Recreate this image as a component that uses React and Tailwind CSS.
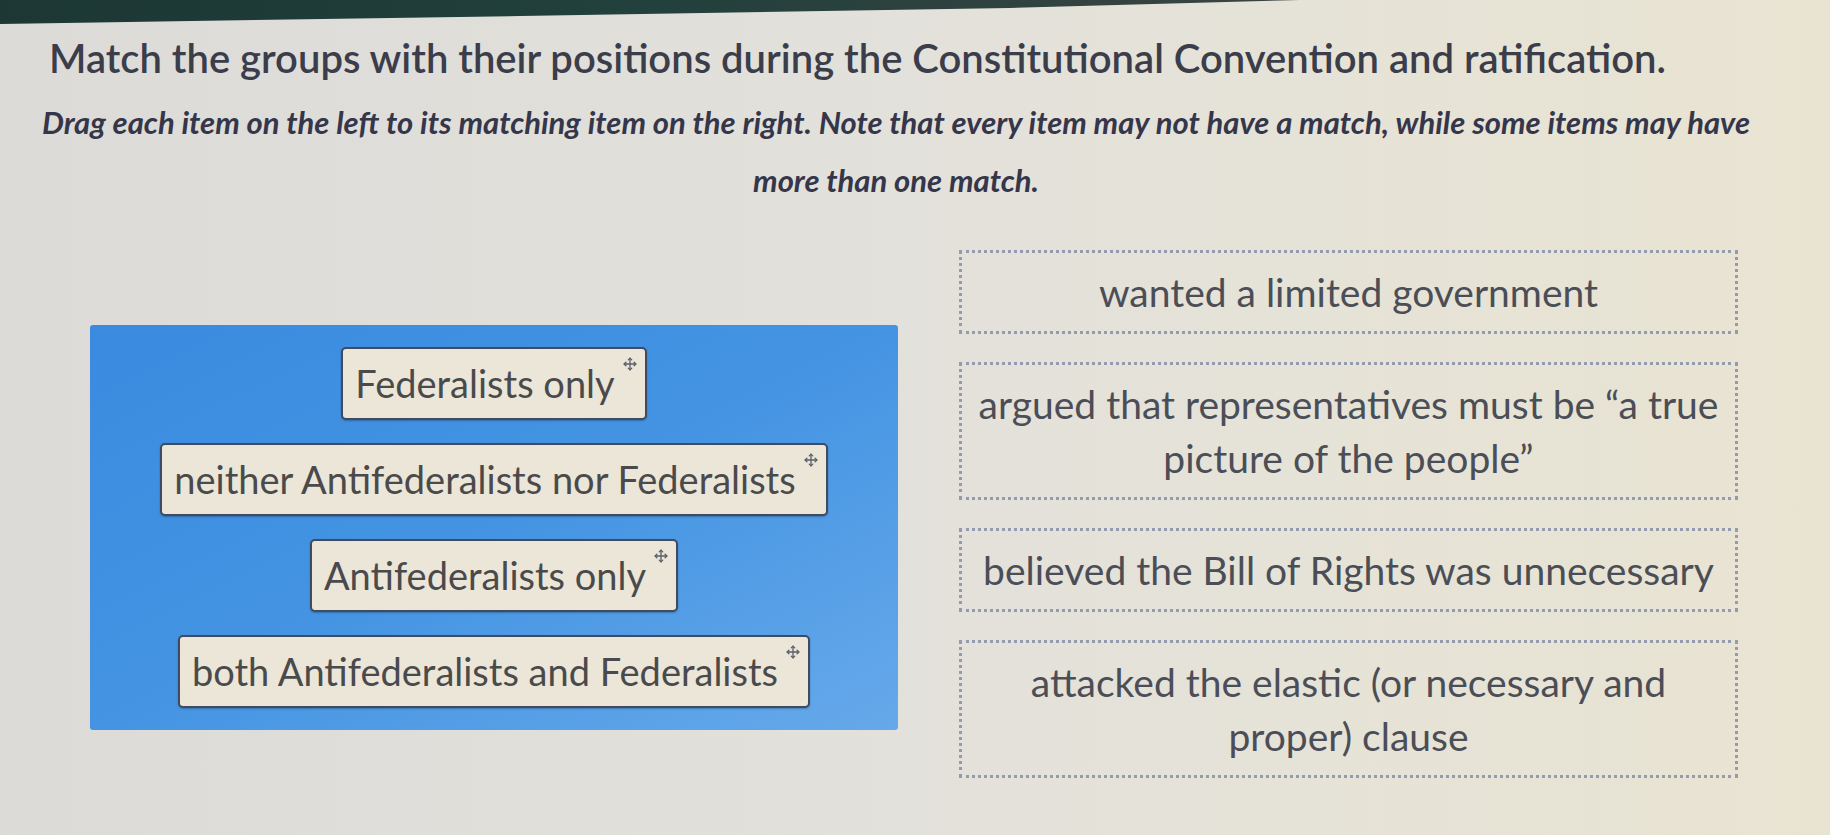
import { Move } from "lucide-react";

const groups = [
  "Federalists only",
  "neither Antifederalists nor Federalists",
  "Antifederalists only",
  "both Antifederalists and Federalists",
];

const positions = [
  "wanted a limited government",
  "argued that representatives must be \u201ca true picture of the people\u201d",
  "believed the Bill of Rights was unnecessary",
  "attacked the elastic (or necessary and proper) clause",
];

function DragItem({ label }) {
  return (
    <div className="relative rounded-[5px] border-2 border-[#3e4b60] bg-[#ebe6d7] py-[10px] pl-3 pr-[30px] text-[38px] leading-[49px] text-[#4a4a4c] shadow-[0_1px_2px_rgba(0,0,0,0.25)]">
      {label}
      <Move
        size={14}
        strokeWidth={2.2}
        className="absolute right-[8px] top-[8px] text-[#585d68]"
      />
    </div>
  );
}

function DropTarget({ label }) {
  return (
    <div className="border-[3px] border-dotted border-[#929cae] px-[10px] py-[12px] text-center text-[39px] leading-[54px] text-[#4b4e56]">
      {label}
    </div>
  );
}

export default function App() {
  return (
    <div className="min-h-screen w-full overflow-hidden bg-gradient-to-r from-[#dcdbd8] via-[#e3e1db] to-[#e9e4d2] font-['Lato',sans-serif]">
      {/* monitor bezel edge along the top */}
      <svg className="block h-[24px] w-full" viewBox="0 0 1830 24" preserveAspectRatio="none">
        <defs>
          <linearGradient id="bezel" x1="0" x2="1" y1="0" y2="0">
            <stop offset="0" stopColor="#1c3734" />
            <stop offset="0.5" stopColor="#22403c" />
            <stop offset="1" stopColor="#3a4442" />
          </linearGradient>
        </defs>
        <polygon points="0,0 1300,0 1010,8 520,16 0,24" fill="url(#bezel)" />
      </svg>

      <div className="ml-[36px] w-[1720px]">
        <h1 className="mt-[12px] pl-[13px] text-[40px] font-semibold leading-[44px] text-[#3b3d4a]">
          Match the groups with their positions during the Constitutional Convention and ratification.
        </h1>
        <p className="mt-[13px] text-center text-[31px] font-bold italic leading-[58px] text-[#35364a]">
          Drag each item on the left to its matching item on the right. Note that every item may not have a match, while some items may have more than one match.
        </p>
      </div>

      <div className="mt-[41px] flex items-start gap-[61px] pl-[90px]">
        {/* draggable groups */}
        <div className="mt-[75px] flex w-[808px] flex-col items-center gap-[23px] rounded-[3px] bg-gradient-to-br from-[#3a8ae0] via-[#4494e3] to-[#66a9ea] py-[22px]">
          {groups.map((g) => (
            <DragItem key={g} label={g} />
          ))}
        </div>

        {/* drop targets */}
        <div className="flex w-[779px] flex-col gap-[28px]">
          {positions.map((p) => (
            <DropTarget key={p} label={p} />
          ))}
        </div>
      </div>
    </div>
  );
}
